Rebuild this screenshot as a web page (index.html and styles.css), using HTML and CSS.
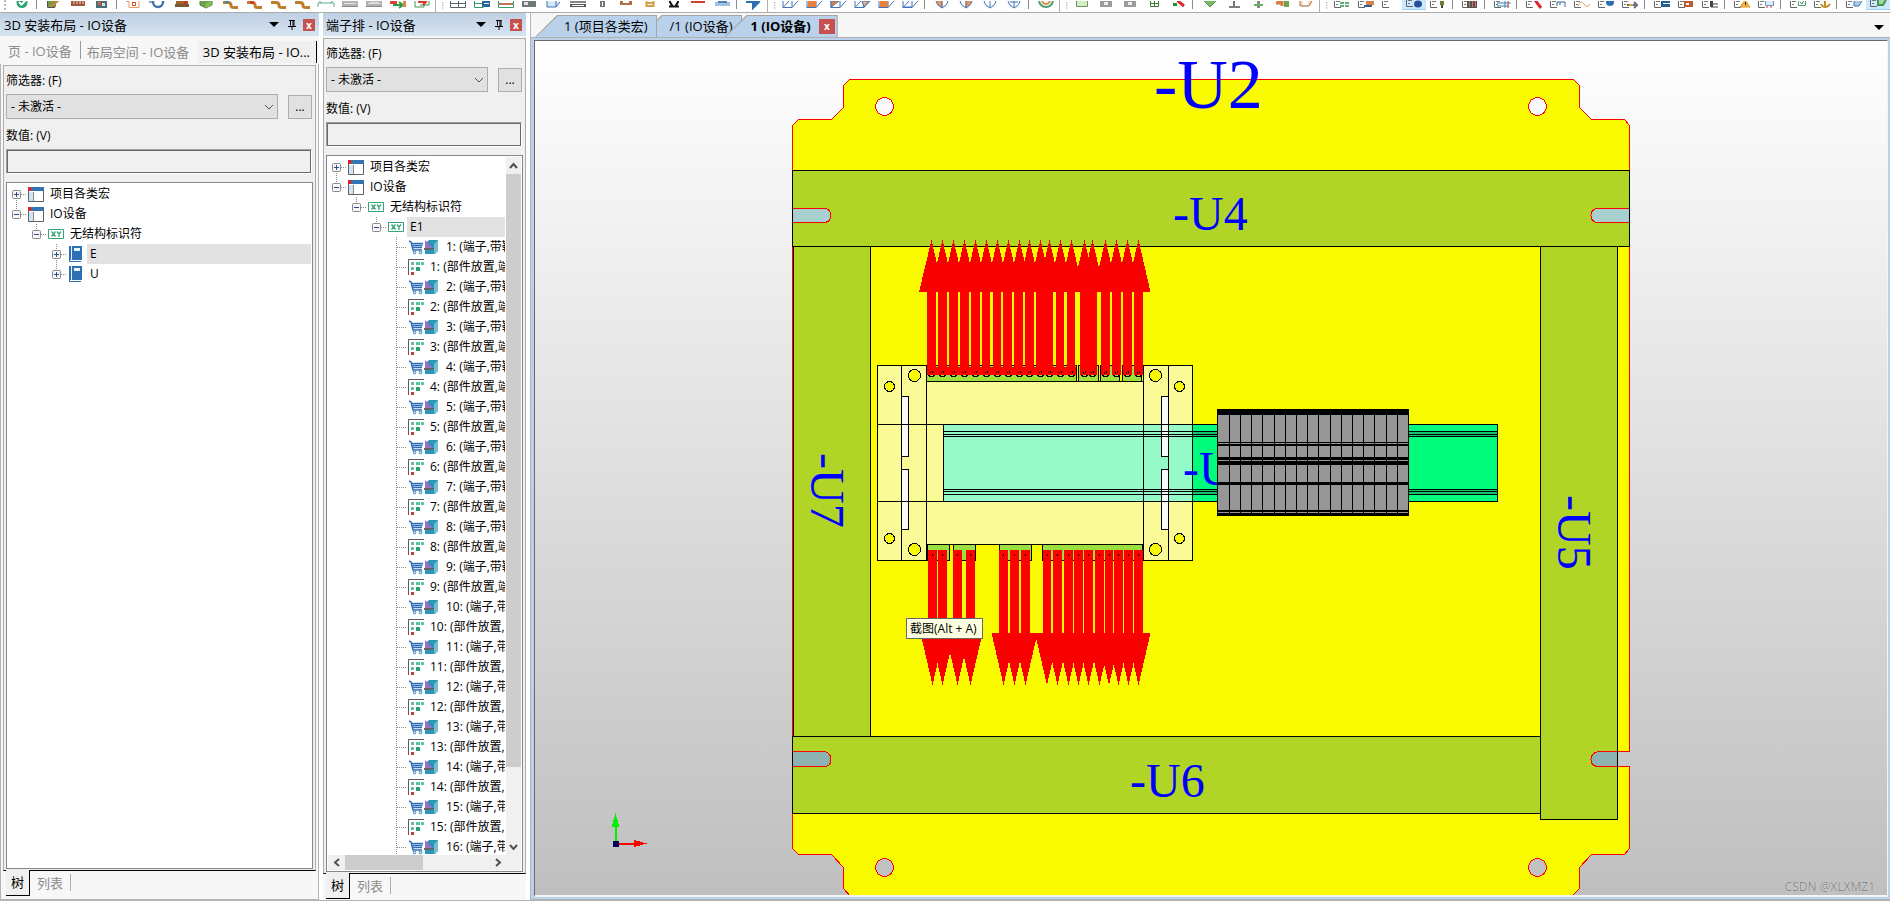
FILE: index.html
```html
<!DOCTYPE html>
<html lang="zh-CN">
<head>
<meta charset="utf-8">
<title>3D 安装布局 - IO设备</title>
<link rel="stylesheet" href="styles.css">
</head>
<body>
<svg class="defs" aria-hidden="true">
  <symbol id="i-project" viewBox="0 0 16 16"><path d="M.5 2.500h15v13H.5z" fill="#fff" stroke="#5f5f5f"/><path d="M3 1h13v4H3z" fill="#3572b0"/><path d="M0 1h3v4H0z" fill="#ee1c1c"/><path d="M1 6h4v9H1z" fill="#cfe6f7"/><path d="M5 6h1v9H5z" fill="#8a8a8a"/></symbol>
  <symbol id="i-xy" viewBox="0 0 16 16"><path d="M.5 3.500h15v9H.5z" fill="#fff" stroke="#38a378"/><path d="M3.500 5.500l4 5m0-5l-4 5M9 5.500L11 8l2-2.500M11 8v3" fill="none" stroke="#38a378" stroke-width="1.300"/></symbol>
  <symbol id="i-book" viewBox="0 0 16 16"><path d="M1 0h13v14H1zM1 14h12v2H1z" fill="#2f70b5"/><path d="M3 0h1v14H3zM6 2h6v3H6z" fill="#e8f2fb"/><path d="M2 14h12v1H2z" fill="#fff"/></symbol>
  <symbol id="i-terminal" viewBox="0 0 32 16"><path d="M1 2l2 1 2 8h9" fill="none" stroke="#2f70b5" stroke-width="1.500"/><path d="M4 4.500h11M4.500 6.500h10M5 8.500h9" stroke="#2f70b5" stroke-width="1.300"/><circle cx="6.500" cy="13.500" r="1.300" fill="none" stroke="#2f70b5"/><circle cx="12.500" cy="13.500" r="1.300" fill="none" stroke="#2f70b5"/><path d="M17 5l4-4h9v11l-3 3H17z" fill="#2b96b8"/><path d="M26 5l4-4v11l-4 3z" fill="#6fc0d6"/><path d="M17 1l9 9h-9z" fill="#9673c9"/><path d="M16 9h10v2H16z" fill="#656565"/></symbol>
  <symbol id="i-part" viewBox="0 0 16 16"><path d="M.5 16V.5H16" fill="none" stroke="#5c5c5c"/><path d="M3 3h3v3H3zM8 3h4v3H8zM13 3h3v3h-3zM3 8h3v3H3z" fill="#56c79c"/><path d="M8 8h4v4H8z" fill="#2e9f70"/><path d="M3 13h3v3H3z" fill="#c93f2b"/></symbol>
  <symbol id="i-pin" viewBox="0 0 8 10"><path d="M2.500 0v5.500M1 .5h5.500M5 0v6M6 0v6M0 6.500h8M4 7v3" fill="none" stroke="#000"/></symbol>
</svg>

<div class="toolbar" id="toolbar" role="toolbar"></div>

<main class="workspace">
  <section class="panel framed">
    <header class="panel-title"><h2>3D 安装布局 - IO设备</h2>
      <button class="tool drop" aria-label="菜单"></button>
      <button class="tool" aria-label="固定"><svg width="8" height="10"><use href="#i-pin"/></svg></button>
      <button class="close" aria-label="关闭">x</button>
    </header>
    <nav class="top-tabs">
      <button>页 - IO设备</button><button>布局空间 - IO设备</button><button class="active">3D 安装布局 - IO...</button>
    </nav>
    <div class="outer">
      <div class="form">
        <label class="caption" for="filter-a">筛选器: (F)</label>
        <div class="filter">
          <span class="combo"><select id="filter-a"><option>- 未激活 -</option></select><svg width="10" height="6"><path d="M1 1l4 4 4-4" fill="none" stroke="#505050"/></svg></span>
          <button class="more">...</button>
        </div>
        <label class="caption second" for="value-a">数值: (V)</label>
        <input class="value" id="value-a" type="text">
        <div class="tree"><ul class="rows" id="tree-a"></ul></div>
      </div>
      <nav class="bottom-tabs"><button class="active">树</button><button>列表</button></nav>
    </div>
  </section>

  <section class="panel narrow">
    <header class="panel-title"><h2>端子排 - IO设备</h2>
      <button class="tool drop" aria-label="菜单"></button>
      <button class="tool" aria-label="固定"><svg width="8" height="10"><use href="#i-pin"/></svg></button>
      <button class="close" aria-label="关闭">x</button>
    </header>
    <div class="outer">
      <div class="form">
        <label class="caption" for="filter-b">筛选器: (F)</label>
        <div class="filter">
          <span class="combo"><select id="filter-b"><option>- 未激活 -</option></select><svg width="10" height="6"><path d="M1 1l4 4 4-4" fill="none" stroke="#505050"/></svg></span>
          <button class="more">...</button>
        </div>
        <label class="caption second" for="value-b">数值: (V)</label>
        <input class="value" id="value-b" type="text">
        <div class="tree scrolling">
          <ul class="rows" id="tree-b"></ul>
          <div class="vbar"><svg width="15" height="17"><path d="M4 11l3.500-4 3.500 4" fill="none" stroke="#505050" stroke-width="2"/></svg><i></i><svg width="15" height="17"><path d="M4 7l3.500 4L11 7" fill="none" stroke="#505050" stroke-width="2"/></svg></div>
          <div class="hbar"><svg width="17" height="15"><path d="M11 4L7 7.500 11 11" fill="none" stroke="#505050" stroke-width="2"/></svg><i></i><svg width="17" height="15"><path d="M6 4l4 3.500L6 11" fill="none" stroke="#505050" stroke-width="2"/></svg></div>
        </div>
      </div>
      <nav class="bottom-tabs"><button class="active">树</button><button>列表</button></nav>
    </div>
  </section>

  <section class="document">
    <nav class="doc-tabs">
      <button class="doc-tab first"><span>1 (项目各类宏)</span></button>
      <button class="doc-tab"><span>/1 (IO设备)</span></button>
      <div class="doc-tab current"><span>1 (IO设备)</span><button class="close" aria-label="关闭">x</button></div>
      <button class="tool drop" aria-label="窗口列表"></button>
    </nav>
    <div class="frame">
      <div class="viewport">
        <svg id="scene" viewBox="535 41 1352 854" shape-rendering="crispEdges"></svg>
        <div class="tooltip" role="tooltip">截图(Alt + A)</div>
        <div class="mark">CSDN @XLXMZ1</div>
      </div>
    </div>
  </section>
</main>
<script src="app.js"></script>
</body>
</html>
```
FILE: styles.css
```css
* { box-sizing: border-box; }
html, body { height: 100%; }
body {
  margin: 0;
  display: flex;
  flex-direction: column;
  overflow: hidden;
  background: #fff;
  color: #000;
  font: 12px/20px "Open Sans", "Noto Sans CJK SC", sans-serif;
}
button, select, input { font: inherit; color: inherit; margin: 0; padding: 0; border: 0; border-radius: 0; background: none; }
svg { display: block; flex: none; }
h2 { margin: 0; font-size: 13px; font-weight: 400; flex: 1; white-space: nowrap; }
ul { list-style: none; margin: 0; padding: 0; }
.defs { position: absolute; width: 0; height: 0; }

.toolbar { display: flex; flex: none; height: 13px; overflow: hidden; border-bottom: 1px solid #ababab; background: #fff; }
.toolbar button { flex: none; width: 24px; height: 10px; }
.toolbar button.on { background: #cce8ff; border-bottom: 1px solid #99d1ff; }
.grip { flex: none; width: 10px; height: 12px; padding-left: 4px; }
.sep { flex: none; width: 8px; height: 12px; padding-left: 2px; }
.sep::before { content: ""; display: block; width: 1px; height: 9px; background: #8d8d8d; }
.sep.full { width: 4px; padding-left: 1px; }
.sep.full::before { height: 12px; background: #b0b0b0; }
.sep.full + .grip { width: 8px; }

.workspace { flex: 1; min-height: 0; display: flex; gap: 4px; margin-bottom: 1px; border-bottom: 1px solid #b4b4b4; }
.panel { flex: none; width: 319px; display: flex; flex-direction: column; background: #f7f7f7; }
.panel.narrow { width: 203px; }
.panel-title {
  flex: none; display: flex; align-items: center; gap: 4px; height: 23px; padding: 0 4px;
  background: linear-gradient(#bfd0e3, #d6e4f2);
}
.panel.narrow .panel-title { margin-bottom: 2px; padding-left: 3px; }
.tool { width: 14px; height: 14px; display: grid; place-items: center; }
.drop::before { content: ""; border: 5px solid transparent; border-top-color: #000; border-bottom: 0; }
.close { width: 12px; height: 12px; background: #c75050; color: #fff; font-size: 10px; font-weight: 700; line-height: 10px; text-align: center; }

.top-tabs { flex: none; display: flex; align-items: stretch; height: 28px; padding: 5px 2px 1px 0; }
.top-tabs button { padding: 0 8px; color: #8c8c8c; font-size: 13px; line-height: 20px; white-space: nowrap; }
.top-tabs button + button { padding: 0 0 0 6px; }
.top-tabs button:first-child { border-right: 1px solid #9a9a9a; height: 18px; }
.top-tabs button.active { margin-left: auto; padding: 0 6px 0 5px; background: #f0f0f0; color: #000; border-right: 1px solid #000; }

.outer { flex: 1; min-height: 0; display: flex; flex-direction: column; }
.framed .outer { border: 1px solid #b4b4b4; border-top: 0; padding: 1px 2px 3px; }
.narrow .outer { padding-bottom: 1px; }
.form {
  flex: 1; min-height: 0; display: flex; flex-direction: column; padding: 5px 2px 1px;
  border: 1px solid #adadad; border-bottom-color: #000; background: #f0f0f0;
}
.caption { flex: none; height: 20px; }
.second { margin-top: 8px; }
.filter { flex: none; display: flex; justify-content: space-between; gap: 10px; margin: 3px 1px 0 0; height: 24px; }
.combo { position: relative; flex: 1; display: block; }
.combo select { appearance: none; width: 100%; height: 25px; padding-left: 4px; background: #e1e1e1; border: 1px solid #adadad; }
.combo svg { position: absolute; right: 4px; top: 10px; pointer-events: none; }
.more { width: 24px; height: 24px; margin-top: 1px; background: #e1e1e1; border: 1px solid #adadad; line-height: 20px; }
.value { flex: none; height: 25px; margin: 3px 1px 0 0; border: 1px solid; border-color: #a0a0a0 #fff #fff #a0a0a0; box-shadow: inset 0 0 0 1px #696969; padding: 0 4px; }
.tree { flex: 1; min-height: 0; margin-top: 8px; padding: 1px 0; border: 1px solid #828790; background: #fff; overflow: hidden; }
.scrolling { display: grid; grid-template: minmax(0, 1fr) 15px / minmax(0, 1fr) 15px; padding: 1px; }
.scrolling .rows { margin-left: -1px; }
.rows { overflow: hidden; min-height: 0; }
.rows li { display: flex; align-items: center; height: 20px; padding-right: 1px; white-space: nowrap; }
.rows .d1 { padding-left: 20px; }
.rows .d2 { padding-left: 40px; }
.rows .d3 { padding-left: 60px; }
.twist { flex: none; width: 21px; height: 20px; }
.rows span { flex: 1; overflow: hidden; margin-left: 3px; padding-left: 3px; }
.rows .selected { background: #e2e2e2; }
.vbar, .hbar { display: flex; background: #f0f0f0; }
.vbar { flex-direction: column; }
.hbar { grid-column: 1 / 3; padding-right: 14px; }
.vbar i { height: 85%; background: #cdcdcd; }
.hbar i { width: 78px; margin-right: auto; background: #cdcdcd; }
.vbar svg:last-child { margin-top: auto; }

.bottom-tabs { flex: none; display: flex; height: 25px; padding-left: 3px; color: #8c8c8c; font-size: 13px; }
.bottom-tabs button { margin: 3px 0 5px; padding: 0 7px; border-right: 1px solid #adadad; line-height: 16px; }
.bottom-tabs button.active { margin: -1px 0 0; padding: 0 5px 1px; background: #f0f0f0; color: #000; border: solid #000; border-width: 0 1px 1px 0; }

.document { flex: 1; min-width: 0; display: flex; flex-direction: column; border-left: 1px solid #b4b4b4; background: #f6f6f6; }
.doc-tabs { flex: none; display: flex; height: 25px; padding: 2px 4px 0; font-size: 13px; border-bottom: 1px solid #b0b0b0; }
.doc-tab { position: relative; z-index: 1; display: flex; align-items: center; gap: 8px; height: 22px; padding: 0 10px 0 30px; line-height: 20px; background: #a6a6a6; clip-path: polygon(22px 0, 100% 0, 100% 100%, 0 100%); white-space: nowrap; }
.doc-tab::before { content: ""; position: absolute; inset: 1px 1px 0; background: #b9d1ea; clip-path: polygon(22px 0, 100% 0, 100% 100%, 0 100%); }
.doc-tab > * { position: relative; }
.doc-tab.first { z-index: 2; padding-left: 29px; }
.doc-tab + .doc-tab { margin-left: -18px; }
.doc-tab.current { z-index: 3; padding: 0 3px 0 26px; font-weight: 700; }
.doc-tab .close { width: 16px; height: 15px; line-height: 13px; }
.doc-tabs > .tool { margin: 5px 0 0 auto; }
.frame { flex: 1; min-height: 0; display: flex; padding: 2px 2px 2px 3px; border-bottom: 1px solid #b4b4b4; background: #b9d1ea; }
.viewport { position: relative; flex: 1; min-width: 0; border: solid; border-width: 1px 1px 2px 1px; border-color: #696969 #f4f4f4 #f4f4f4 #696969; background: linear-gradient(#fff, #bfbfbf); }
#scene { width: 100%; height: 100%; }
#scene text { font-family: "Liberation Serif", serif; font-size: 48px; fill: #00f; }
#scene .large { font-size: 70px; }
.tooltip { position: absolute; left: 371px; top: 577px; padding: 0 5px 0 3px; border: 1px solid #676767; background: #ffffe1; line-height: 19px; white-space: nowrap; }
.mark { position: absolute; right: 12px; bottom: -2px; color: #888; text-shadow: 0 0 1px #eee; }
```
FILE: app.js
```js
const r = (x, y, w, h, f) => `<rect x="${x}" y="${y}" width="${w}" height="${h}" fill="${f}"/>`;
const p = (d, s, w = 1, f = 'none') => `<path d="${d}" stroke="${s}" stroke-width="${w}" fill="${f}"/>`;

/* ---- toolbar ---- */
const page = p('M4.5 0V6.500H11', '#666') + r(6, 0, 4, 1, '#777') + r(6, 3, 2, 1, '#777');
const pipe = p('M5 1.500h5q3 0 3 3 0 2 3 2h4', '#c07d2c', 3);
const cube = '#3f74b5';
const box = face => p('M5 0v6.500h9V0M14 6.500L20 0M5 6.500L11 0', cube, 1, 'none') + face;
const gem = face => face + p('M6 0q0 4 6 7 6-3 6-7M12 0v7', cube);
const grey = r(4, 0, 16, 6, '#b3b3b3') + r(6, 2, 12, 1, '#e6e6e6') + r(4, 5, 16, 1, '#8b8b8b');
const icons = [
  'grip',
  '<circle cx="12" cy="1.500" r="5.500" fill="#2fa070"/>' + p('M9 1l2.500 2.500L16-1', '#fff', 2), 'sep',
  r(5, 0, 9, 6, '#6b9b47') + p('M8 6l8-7', '#bf8546', 3) + p('M5.500 0v6.500H13', '#555'),
  r(5, 0, 14, 5, '#9c593c') + p('M8 0v3M11 0v3M14 0v3M17 0v3', '#f2d7bf'),
  r(6, 0, 11, 7, '#4f6f78') + r(8, 1, 3, 3, '#e45d32') + r(12, 2, 3, 3, '#c9e8e2'), 'sep',
  r(7, 0, 10, 7, '#fff') + p('M4 .5h3v6h10V0', '#e2a25d') + r(10, 1, 4, 4, '#df5632') + r(11, 2, 2, 2, '#fff'),
  '<circle cx="12" cy="1" r="5" fill="none" stroke="#4276a8" stroke-width="2.500"/>' + r(3, 0, 3, 2, '#7aa2ca'),
  r(6, 0, 12, 5, '#a36429') + r(5, 3, 14, 3, '#735b35') + r(14, 0, 3, 3, '#d23124'),
  p('M6 0v4l6 3 6-3V0', '#558235', 1, '#6da246') + p('M12 3l5-3v4l-5 3z', '#84ba59', 1, '#84ba59'),
  pipe + r(7, 0, 4, 2, '#3585c5'), pipe + r(8, 0, 4, 3, '#d43d2b'), pipe, pipe,
  p('M4 6V2h16v4M8 2l-3-2M16 2l3-2', '#5fa991'), grey, grey + r(8, 1, 9, 2, '#ddd'),
  r(4, 0, 7, 3, '#dc432e') + p('M7 4h10m-4-3l4 3-4 3', '#2c9b4d', 2) + r(17, 0, 3, 6, '#e98244'),
  p('M5 0v6h9V0M10 4h9V0', '#429c54') + p('M8 1h8m-3-2l3 2-3 3', '#d43d2b', 2), 'full', 'grip',
  p('M4.500 0v6.500h15V0M12.500 0v6M4 2.500h16', '#5a6370'),
  p('M4.500 0v6.500h9M4 2.500h9', '#36986e') + r(12, 0, 8, 6, '#2c649d') + r(14, 2, 5, 1, '#e6eef6'),
  p('M4.500 0v6.500h15V0', '#3b9b72') + r(5, 2, 14, 2, '#bc7556'),
  r(4, 0, 14, 6, '#70787a') + r(6, 1, 4, 3, '#e0e0e0'),
  p('M5 0v6h9l4-5', cube, 1, '#d9e6f3') + p('M14 6V0', cube),
  r(4, 0, 16, 2, '#858585') + r(4, 3, 16, 3, '#555') + p('M6 4.500h12', '#fff', 1),
  r(10, 0, 5, 6, '#777') + r(12, 1, 1, 4, '#fff'),
  r(6, 0, 12, 4, '#ad704a') + r(9, 0, 6, 2, '#fff'),
  p('M8.500 0v6M15.500 0v6M8 2h8M8 5h8', '#d4a14a', 2),
  p('M7 5.500h4Q6 0 9-2M17 5.500h-4Q18 0 15-2', '#171717', 2),
  p('M5 0h14', '#d3402f', 4), p('M5 2h15M5 4h15', '#4c83bd') + r(8, 0, 9, 2, '#4c83bd'), 'sep',
  p('M4 1h12m-5-3l6 3-6 6z', '#2f6faf', 2, '#2f6faf'), 'full', 'grip',
  box(''), box(r(6, 0, 8, 6, '#e9823e')), box(p('M5 6V0h8z', cube, 1, '#e9823e')), box(p('M14 6l5-6h-7z', cube, 1, '#efad80')), box(r(6, 0, 8, 6, '#e9823e')), box(p('M5 6h9', cube)), 'sep',
  gem(p('M7 0h5v6q-5-2-5-6z', '#e99259', 1, '#e99259')), gem(p('M12 0h5q0 4-5 6z', '#e99259', 1, '#e99259')), gem(''), gem(p('M8 1h8', cube)), 'sep',
  '<circle cx="12" cy="-1" r="7" fill="none" stroke="#4f9d74" stroke-width="2"/><circle cx="12" cy="-1" r="4" fill="none" stroke="#d5924d" stroke-width="2"/>', 'full', 'grip',
  p('M6.500 0v5.500h11V0', '#679959', 1, '#d5edc5'), r(6, 0, 12, 6, '#9a9a9a') + r(10, 1, 4, 3, '#eee'), r(6, 0, 12, 6, '#9a9a9a') + r(10, 1, 4, 3, '#eee'),
  p('M8.500 0v5.500h8V0M12.500 0v6M8 2.500h9', '#367d2d'), p('M12 1V-2', '#23932e', 2) + p('M12 0l6 5', '#d63031', 3) + r(7, 2, 4, 3, '#23932e'), 'sep',
  p('M6 0l6 6 6-6', '#57944a', 1, '#79b769'), r(11, 0, 2, 5, '#777') + r(7, 5, 11, 2, '#808080'), r(11, 0, 3, 7, '#888') + r(8, 3, 9, 2, '#66b267'),
  p('M7 0h5v5M6 2h6', '#d87d3f', 3) + r(14, 0, 5, 6, '#69a84e'), p('M6 0v5h9l3-5', '#a76e42', 1, '#f3dcc7') + r(9, 0, 5, 4, '#fff'), 'full', 'grip',
  page + r(10, 1, 9, 5, '#62b17b') + p('M14.500 0v6M10 3.500h9', '#fff'), page + r(12, 0, 8, 4, '#d88045') + p('M10 5h8', '#315e91', 2), page,
  '*' + page + '<ellipse cx="16" cy="4" rx="4" ry="3.500" fill="#244e9a"/>', page + r(14, 0, 4, 4, '#6f7a34') + r(15, 4, 2, 3, '#454a24'), 'sep',
  page + r(9, 0, 10, 7, '#555') + p('M11.500 0v6M14.500 0v6M17.500 0v6', '#d86e62'), 'sep',
  page + p('M7 2h14M7 5h12M15 0v7', '#3084b0') + p('M18 0v7', '#c33'), 'sep',
  page + p('M13-1l6 8', '#df2630', 3), page + p('M11 5V1h8v5M14 1v3', '#44699a'), page + p('M8 5q3-7 6-2t6 0', '#dda16e'), page + '<circle cx="16" cy="1" r="4" fill="#2e71af"/>', page + p('M9 4h10m-3-3l3 3-3 3', '#676e85', 2) + r(11, 3, 4, 2, '#d3a833'), 'sep',
  page + r(11, 0, 9, 6, '#28608d') + r(13, 2, 7, 1, '#fff'), page + r(10, 0, 9, 6, '#bd5b37') + r(12, 2, 3, 2, '#fff'), page + r(12, 0, 3, 6, '#444') + p('M13 3h7M13 6h7', '#444'), 'sep',
  page + p('M10 6l5-7 5 7z', '#df982b', 1, '#f2b641') + r(15, 1, 1, 3, '#222'), page + p('M11.500 0v4.500h8V0', '#6f97bd', 1, '#dceafa') + p('M13 5v2M17 5v2', '#d33', 1), 'sep',
  page + p('M12.500 0v4.500h7V0', '#5b9a7b', 1, '#fff') + p('M14 1l2 2 2-4', '#2c9b4d'), page + p('M15 0v6M11 3q1 3 4 3t5-3', '#c68f25', 2), 'sep',
  page + p('M12 0v5h5l3-5', '#4479b0', 1, '#a9cae8'), '*' + page + p('M12 0v5h5l3-5', '#45964f', 2, '#a8d69f')
];
document.getElementById('toolbar').innerHTML = icons.map((c, i) => {
  if (c === 'grip') return `<svg class="grip" viewBox="0 0 6 12">${r(0, 0, 2, 2, '#bbb')}${r(0, 4, 2, 2, '#bbb')}${r(0, 8, 2, 2, '#bbb')}</svg>`;
  if (c === 'sep') return '<div class="sep"></div>';
  if (c === 'full') return '<div class="sep full"></div>';
  const on = c[0] === '*';
  return `<button${on ? ' class="on"' : ''} aria-label="工具 ${i}"><svg width="24" height="9" viewBox="0 0 24 9">${on ? c.slice(1) : c}</svg></button>`;
}).join('');

/* ---- trees: depth, sign, icon, label, line above, line below, selected ---- */
function row([depth, sign, icon, label, up, down, sel]) {
  const dash = 'stroke="#8c8c8c" stroke-dasharray="1 1"';
  let s = '';
  if (up) s += `<path d="M9.500 0v10" ${dash}/>`;
  if (down) s += `<path d="M9.500 10v10" ${dash}/>`;
  s += `<path d="M10 10.500h10" ${dash}/>`;
  if (sign) s += `<rect x="5.500" y="6.500" width="8" height="8" rx="1" fill="#f7f7f7" stroke="#888"/><path d="M7 10.500h5${sign === '+' ? 'M9.500 8v5' : ''}" stroke="#2a489c"/>`;
  const w = icon === 'terminal' ? 32 : 16;
  const cell = `<svg width="21" height="20">${s}</svg>`;
  return `<li class="d${depth}">${sign ? `<button class="twist" aria-label="展开">${cell}</button>` : cell}<svg width="${w}" height="16"><use href="#i-${icon}"/></svg><span${sel ? ' class="selected"' : ''}>${label}</span></li>`;
}
document.getElementById('tree-a').innerHTML = [
  [0, '+', 'project', '项目各类宏', 0, 1], [0, '-', 'project', 'IO设备', 1, 0], [1, '-', 'xy', '无结构标识符', 1, 0],
  [2, '+', 'book', 'E', 1, 1, 1], [2, '+', 'book', 'U', 1, 0]
].map(row).join('');
const items = [[0, '+', 'project', '项目各类宏', 0, 1], [0, '-', 'project', 'IO设备', 1, 0], [1, '-', 'xy', '无结构标识符', 1, 0], [2, '-', 'xy', 'E1', 1, 0, 1]];
for (let n = 1; n <= 16; n++) {
  items.push([3, '', 'terminal', n + ': (端子,带鞍', 1, 1]);
  if (n < 16) items.push([3, '', 'part', n + ': (部件放置,端', 1, 1]);
}
document.getElementById('tree-b').innerHTML = items.map(row).join('');

/* ---- mounting panel drawing ---- */
const b = (x1, y1, x2, y2, f, s = '#000') => `<rect x="${x1 + .5}" y="${y1 + .5}" width="${x2 - x1}" height="${y2 - y1}" fill="${f}" stroke="${s}"/>`;
const h = (x1, x2, y, w = 1, c = '#000') => r(x1, y, x2 - x1, w, c);
const v = (x, y1, y2, w = 1, c = '#000') => r(x, y1, w, y2 - y1, c);
const c = (x, y, q, f, s = '#000') => `<circle cx="${x + .5}" cy="${y + .5}" r="${q}" fill="${f}" stroke="${s}"/>`;
const green = '#b0d526', cream = '#fafa96', sun = '#fbfb00';
let g = p('M849.5 79.500H1573.500L1579.500 85.500V107.500L1591.500 119.500H1624.500L1629.500 125.500V751.500H1600.500V766.500H1629.500V848.500L1624.500 854.500H1591.500L1579.500 867.500V888.500L1571.500 896.500H850.500L843.500 888.500V867.500L831.500 854.500H798.500L792.500 848.500V125.500L798.500 119.500H831.500L843.500 107.500V85.500Z', '#f00', 1, sun);
g += c(884, 106, 9, '#fafafa', '#f00') + c(1537, 106, 9, '#fafafa', '#f00') + c(884, 867, 9, '#c1c1c1', '#f00') + c(1537, 867, 9, '#c1c1c1', '#f00');
g += b(793, 246, 870, 736, green) + b(792, 170, 1629, 246, green) + b(792, 736, 1540, 813, green) + b(1540, 246, 1617, 819, green);
g += p('M793 208.500h32q6 1 6 7t-6 7h-32', '#f00', 1, '#a8d0ce') + p('M1629 208.500h-32q-6 1-6 7t6 7h32', '#f00', 1, '#a8d0ce');
g += p('M793 751.500h31q7 1 7 8t-7 7h-31', '#f00', 1, '#8cb2b2') + p('M1617 751.500h-18q-8 1-8 8t8 7h18', '#f00', 1, '#8cb2b2') + v(1617, 751, 767);

/* rail and slotted unit */
g += b(877, 365, 926, 560, cream) + b(1143, 365, 1192, 560, cream) + b(926, 381, 1143, 544, cream) + v(901, 365, 560) + v(1168, 365, 560);
g += r(943, 424, 250, 78, '#96fac8') + r(1193, 424, 305, 78, '#00fb7d') + r(1193, 432, 305, 4, '#12c46c') + r(1193, 490, 305, 4, '#12c46c');
for (const x of [901, 1161]) for (const y of [396, 469]) g += b(x, y, x + 7, y + 60, '#fafafa');
g += h(877, 1498, 424) + h(877, 1498, 501) + v(943, 424, 502) + v(1497, 424, 502);
for (const y of [431, 434, 436, 489, 491, 494]) g += h(943, 1498, y);
g += v(1143, 424, 502) + v(1168, 424, 502) + v(1192, 424, 502);
for (const x of [889, 1179]) for (const y of [386, 538]) g += c(x, y, 5, sun);
for (const x of [914, 1155]) for (const y of [375, 549]) g += c(x, y, 6, sun);
for (const [x1, x2] of [[926, 1076], [1078, 1098], [1100, 1119], [1122, 1141]]) g += b(x1, 365, x2, 381, '#9be03c');
for (const [x1, x2] of [[927, 949], [953, 975], [999, 1031], [1042, 1142]]) g += b(x1, 544, x2, 560, '#9be03c');
g += h(927, 1143, 381) + h(927, 1143, 544);

/* connection arrows */
const up = [[927, 9], [938, 9], [949, 9], [960, 9], [971, 9], [982, 8], [993, 8], [1003, 9], [1014, 9], [1025, 9], [1036, 17], [1056, 8], [1067, 8], [1080, 17], [1101, 9], [1112, 9], [1123, 9], [1134, 9]];
const down = [[928, 9], [938, 9], [953, 9], [966, 9], [999, 9], [1010, 9], [1021, 9], [1043, 8], [1053, 9], [1064, 9], [1074, 9], [1084, 9], [1095, 9], [1105, 8], [1114, 9], [1124, 9], [1134, 9]];
const tips = [931, 942, 953, 964, 975, 986, 997, 1008, 1019, 1029, 1040, 1049, 1060, 1071, 1084, 1092, 1105, 1116, 1127, 1138];
for (const x of tips) g += c(x, 373, 3, 'none') + `<path d="M${x - 12} 292L${x}.500 240l12 52z" fill="#f90000"/>`;
for (const [x, w] of up) g += r(x, 290, w, 85, '#f00') + r(x + 3, 372, 1, 2, '#000') + r(x + 5, 371, 1, 2, '#000');
g += r(927, 367, 149, 8, '#f00') + tips.map(x => r(x - 1, 372, 1, 1, '#000') + r(x + 1, 371, 1, 2, '#000')).join('');
for (const [x, w] of down) {
  const m = x + w / 2;
  g += c(m, 553, 3, 'none') + r(x, 550, w, 84, '#f00') + r(x + 4, 554, 1, 2, '#000') + `<path d="M${m - 12} 633L${m} 685l12-52z" fill="#f90000"/>`;
}
g += r(999, 633, 135, 6, '#f90000');

/* labels */
const t = (x, y, s, k = '') => `<text x="${x}" y="${y}" class="${k}">${s}</text>`;
g += t(1154, 108, '-U2', 'large') + t(1173, 230, '-U4') + t(1130, 797, '-U6') + t(1183, 485, '-U');
g += `<text transform="translate(1558 495) rotate(90)">-U5</text><text transform="translate(811 453) rotate(90)">-U7</text>`;

/* terminal block */
g += r(1217, 409, 192, 107, '#969696') + v(1217, 409, 516) + v(1408, 409, 516);
for (const x of [1229, 1240, 1251, 1262, 1274, 1285, 1296, 1307, 1318, 1330, 1341, 1352, 1363, 1374, 1386, 1397]) g += v(x, 409, 516);
for (const [y, w] of [[409, 6], [442, 1], [444, 2], [457, 3], [461, 4], [482, 3], [510, 2], [513, 3]]) g += h(1217, 1409, y, w);

/* axis indicator */
g += v(615, 824, 842, 2, '#00f000') + p('M615.500 815l3 11h-6z', '#00f000', 1, '#00f000') + h(618, 636, 843, 2, '#f00') + p('M645 843.500l-11 3v-6z', '#f00', 1, '#f00') + r(613, 841, 6, 6, '#00005f');
document.getElementById('scene').innerHTML = g;
```
